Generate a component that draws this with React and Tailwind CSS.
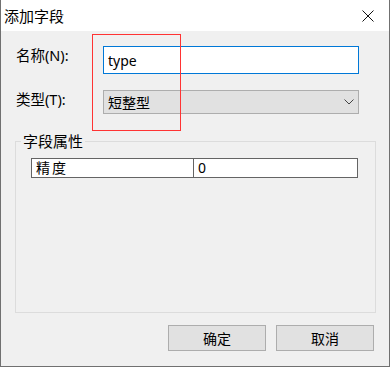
export default function App() {
  const font = { fontFamily: "'Noto Sans', 'Noto Sans CJK SC', sans-serif" };
  return (
    <div
      className="relative flex h-[367px] w-[390px] flex-col border-x border-b border-[#707070] bg-[#f0f0f0] text-black"
      style={font}
    >
      <div className="flex h-[31px] items-center justify-between bg-white pl-[3px] pr-[15px]">
        <span className="text-[15px] leading-[20px] mt-[1px]">添加字段</span>
        <svg width="12" height="12" viewBox="0 0 12 12" className="mt-[1px]">
          <path d="M0.5 0.5 L11.5 11.5 M11.5 0.5 L0.5 11.5" stroke="#111" strokeWidth="1" fill="none" />
        </svg>
      </div>
      <div className="flex flex-1 flex-col">
        <div className="mt-[15px] flex items-start pl-[15px]">
          <div className="w-[87px] text-[14.5px] leading-[18px]">名称(N):</div>
          <div className="flex h-[28px] w-[256px] items-center border border-[#0078d7] bg-white pl-[4px] text-[14px]">
            type
          </div>
        </div>
        <div className="mt-[16px] flex items-start pl-[15px]">
          <div className="w-[87px] text-[14.5px] leading-[18px]">类型(T):</div>
          <div className="flex h-[24px] w-[256px] items-center justify-between border border-[#adadad] bg-[#e1e1e1] pl-[4px] pr-[4px] text-[14px]">
            <span>短整型</span>
            <svg width="10" height="6" viewBox="0 0 10 6">
              <path d="M0.5 0.5 L5 5 L9.5 0.5" stroke="#444" strokeWidth="1" fill="none" />
            </svg>
          </div>
        </div>
        <fieldset className="ml-[14px] mt-[17px] h-[182px] w-[361px] border border-[#dcdcdc]">
          <legend className="ml-[5px] px-[2px] text-[15px] leading-[20px]">字段属性</legend>
          <div className="ml-[15px] mt-[7px] flex h-[20px] w-[327px] border border-[#646464] bg-white text-[14px] leading-[18px]">
            <div className="w-[162px] border-r border-[#646464] pl-[4px] tracking-[2px]">精度</div>
            <div className="flex-1 pl-[4px]">0</div>
          </div>
        </fieldset>
        <div className="mt-[12px] flex justify-end gap-[10px] pr-[15px]">
          <button className="flex h-[26px] w-[98px] items-center justify-center border border-[#adadad] bg-[#e1e1e1] text-[14px]">
            确定
          </button>
          <button className="flex h-[26px] w-[98px] items-center justify-center border border-[#adadad] bg-[#e1e1e1] text-[14px]">
            取消
          </button>
        </div>
      </div>
      <div className="pointer-events-none absolute left-[91px] top-[34px] h-[97px] w-[89px] border border-[#ff3333]" />
    </div>
  );
}
